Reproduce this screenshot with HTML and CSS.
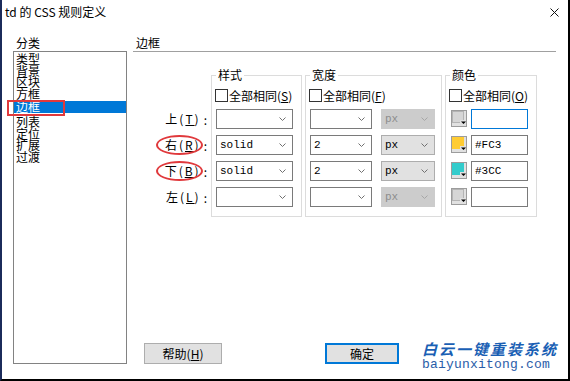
FILE: index.html
```html
<!DOCTYPE html>
<html lang="zh-CN">
<head>
    <meta charset="UTF-8">
    <meta name="viewport" content="width=device-width, initial-scale=1.0">
    <title>td 的 CSS 规则定义</title>
    <link rel="stylesheet" href="styles.css">
</head>
<body>
    <div class="window">
        <div class="titlebar">
            <span class="title">td 的 CSS 规则定义</span>
            <svg class="close" width="9" height="9" viewBox="0 0 9 9"><path d="M0.5 0.5L8.5 8.5M8.5 0.5L0.5 8.5" stroke="#111" stroke-width="1" fill="none"/></svg>
        </div>

        <div class="content">
            <div class="category">
                <div class="section-label">分类</div>
                <ul class="category-list">
                    <li>类型</li>
                    <li>背景</li>
                    <li>区块</li>
                    <li>方框</li>
                    <li class="selected">边框<span class="mark-box"></span></li>
                    <li>列表</li>
                    <li>定位</li>
                    <li>扩展</li>
                    <li>过渡</li>
                </ul>
            </div>

            <div class="panel">
                <div class="panel-title">边框</div>

                <div class="border-grid">
                    <div class="side-labels">
                        <div class="side-label"><span class="key">上(<u>T</u>)</span><span class="colon">:</span></div>
                        <div class="side-label"><span class="key marked">右(<u>R</u>)</span><span class="colon">:</span></div>
                        <div class="side-label"><span class="key marked">下(<u>B</u>)</span><span class="colon">:</span></div>
                        <div class="side-label"><span class="key">左(<u>L</u>)</span><span class="colon">:</span></div>
                    </div>

                    <fieldset class="group group-style">
                        <legend>样式</legend>
                        <div class="same"><span class="check"></span>全部相同(<u>S</u>)</div>
                        <div class="rows">
                            <div class="row"><div class="combo combo-style"><span></span><svg width="7" height="4" viewBox="0 0 7 4"><path d="M0.5 0.5L3.5 3.5L6.5 0.5" stroke="#707070" fill="none"/></svg></div></div>
                            <div class="row"><div class="combo combo-style"><span>solid</span><svg width="7" height="4" viewBox="0 0 7 4"><path d="M0.5 0.5L3.5 3.5L6.5 0.5" stroke="#707070" fill="none"/></svg></div></div>
                            <div class="row"><div class="combo combo-style"><span>solid</span><svg width="7" height="4" viewBox="0 0 7 4"><path d="M0.5 0.5L3.5 3.5L6.5 0.5" stroke="#707070" fill="none"/></svg></div></div>
                            <div class="row"><div class="combo combo-style"><span></span><svg width="7" height="4" viewBox="0 0 7 4"><path d="M0.5 0.5L3.5 3.5L6.5 0.5" stroke="#707070" fill="none"/></svg></div></div>
                        </div>
                    </fieldset>

                    <fieldset class="group group-width">
                        <legend>宽度</legend>
                        <div class="same"><span class="check"></span>全部相同(<u>F</u>)</div>
                        <div class="rows">
                            <div class="row">
                                <div class="combo combo-width"><span></span><svg width="7" height="4" viewBox="0 0 7 4"><path d="M0.5 0.5L3.5 3.5L6.5 0.5" stroke="#707070" fill="none"/></svg></div>
                                <div class="combo combo-unit disabled"><span>px</span><svg width="7" height="4" viewBox="0 0 7 4"><path d="M0.5 0.5L3.5 3.5L6.5 0.5" stroke="#a6a6a6" fill="none"/></svg></div>
                            </div>
                            <div class="row">
                                <div class="combo combo-width"><span>2</span><svg width="7" height="4" viewBox="0 0 7 4"><path d="M0.5 0.5L3.5 3.5L6.5 0.5" stroke="#707070" fill="none"/></svg></div>
                                <div class="combo combo-unit"><span>px</span><svg width="7" height="4" viewBox="0 0 7 4"><path d="M0.5 0.5L3.5 3.5L6.5 0.5" stroke="#707070" fill="none"/></svg></div>
                            </div>
                            <div class="row">
                                <div class="combo combo-width"><span>2</span><svg width="7" height="4" viewBox="0 0 7 4"><path d="M0.5 0.5L3.5 3.5L6.5 0.5" stroke="#707070" fill="none"/></svg></div>
                                <div class="combo combo-unit"><span>px</span><svg width="7" height="4" viewBox="0 0 7 4"><path d="M0.5 0.5L3.5 3.5L6.5 0.5" stroke="#707070" fill="none"/></svg></div>
                            </div>
                            <div class="row">
                                <div class="combo combo-width"><span></span><svg width="7" height="4" viewBox="0 0 7 4"><path d="M0.5 0.5L3.5 3.5L6.5 0.5" stroke="#707070" fill="none"/></svg></div>
                                <div class="combo combo-unit disabled"><span>px</span><svg width="7" height="4" viewBox="0 0 7 4"><path d="M0.5 0.5L3.5 3.5L6.5 0.5" stroke="#a6a6a6" fill="none"/></svg></div>
                            </div>
                        </div>
                    </fieldset>

                    <fieldset class="group group-color">
                        <legend>颜色</legend>
                        <div class="same"><span class="check"></span>全部相同(<u>O</u>)</div>
                        <div class="rows">
                            <div class="row">
                                <svg class="swatch" width="16" height="17" viewBox="0 0 16 17"><rect x="0.5" y="0.5" width="15" height="16" fill="#e1e1e1" stroke="#9c9c9c"/><rect x="1.5" y="1.5" width="11" height="11" fill="#d6d6d6" stroke="#b4b4b4"/><rect x="9" y="10" width="6" height="6" fill="#e1e1e1"/><path d="M10 11.5h5l-2.5 2.5z" fill="#000"/></svg>
                                <div class="color-input focused"></div>
                            </div>
                            <div class="row">
                                <svg class="swatch" width="16" height="17" viewBox="0 0 16 17"><rect x="0.5" y="0.5" width="15" height="16" fill="#e1e1e1" stroke="#9c9c9c"/><rect x="1" y="1" width="12" height="12" fill="#ffcc33"/><rect x="9" y="10" width="6" height="6" fill="#e1e1e1"/><path d="M10 11.5h5l-2.5 2.5z" fill="#000"/></svg>
                                <div class="color-input">#FC3</div>
                            </div>
                            <div class="row">
                                <svg class="swatch" width="16" height="17" viewBox="0 0 16 17"><rect x="0.5" y="0.5" width="15" height="16" fill="#e1e1e1" stroke="#9c9c9c"/><rect x="1" y="1" width="12" height="12" fill="#33cccc"/><rect x="9" y="10" width="6" height="6" fill="#e1e1e1"/><path d="M10 11.5h5l-2.5 2.5z" fill="#000"/></svg>
                                <div class="color-input">#3CC</div>
                            </div>
                            <div class="row">
                                <svg class="swatch" width="16" height="17" viewBox="0 0 16 17"><rect x="0.5" y="0.5" width="15" height="16" fill="#e1e1e1" stroke="#9c9c9c"/><rect x="1.5" y="1.5" width="11" height="11" fill="#d6d6d6" stroke="#b4b4b4"/><rect x="9" y="10" width="6" height="6" fill="#e1e1e1"/><path d="M10 11.5h5l-2.5 2.5z" fill="#000"/></svg>
                                <div class="color-input"></div>
                            </div>
                        </div>
                    </fieldset>
                </div>

                <div class="buttons">
                    <button class="btn">帮助(<u>H</u>)</button>
                    <button class="btn btn-default">确定</button>
                </div>
            </div>
        </div>

        <div class="watermark">
            <div class="wm-name">白云一键重装系统</div>
            <div class="wm-url">baiyunxitong.com</div>
        </div>
    </div>
</body>
</html>
```

FILE: styles.css
```css
* {
    box-sizing: border-box;
}

body {
    margin: 0;
    background-color: #fff;
    font-family: "Noto Sans CJK SC", "Microsoft YaHei", sans-serif;
    font-size: 12px;
    color: #000;
}

.window {
    position: relative;
    width: 570px;
    height: 381px;
    border-left: 2px solid #1b2b5a;
    border-right: 2px solid #000;
    border-bottom: 2px solid #000;
    background-color: #fff;
    display: flex;
    flex-direction: column;
}

.titlebar {
    height: 24px;
    display: flex;
    align-items: center;
    justify-content: space-between;
    padding: 0 9px 0 3px;
}

.title {
    line-height: 24px;
}

.close {
    display: block;
}

.content {
    flex: 1;
    display: flex;
    padding: 11px 0 15px 11px;
    min-height: 0;
}

.category {
    width: 114px;
    display: flex;
    flex-direction: column;
}

.section-label {
    height: 16px;
    line-height: 16px;
    padding-left: 3px;
}

.category-list {
    flex: 1;
    margin: 0;
    padding: 1px 0 0 0;
    list-style: none;
    border: 1px solid #828282;
}

.category-list li {
    height: 11.5px;
    line-height: 11.5px;
    padding-left: 2px;
    white-space: nowrap;
}

.category-list li.selected {
    position: relative;
    height: 12px;
    line-height: 12px;
    margin: 2px 0 3px;
    background-color: #0078d7;
    color: #fff;
}

.mark-box {
    position: absolute;
    left: -7px;
    top: -1px;
    width: 58px;
    height: 16px;
    border: 2px solid #e0393c;
}

.panel {
    width: 423px;
    margin-left: 6px;
    display: flex;
    flex-direction: column;
}

.panel-title {
    height: 17px;
    line-height: 16px;
    padding-left: 3px;
    border-bottom: 1px solid #a0a0a0;
}

.border-grid {
    display: flex;
    align-items: flex-start;
    margin-top: 16px;
}

.side-labels {
    width: 78px;
    padding-top: 41px;
    display: flex;
    flex-direction: column;
    gap: 6px;
}

.side-label {
    height: 20px;
    display: flex;
    align-items: center;
    justify-content: flex-end;
    padding-right: 4px;
}

.side-label .key {
    position: relative;
    line-height: 20px;
    letter-spacing: 2px;
}

.side-label .colon {
    margin-left: 3px;
}

.key.marked::after {
    content: "";
    position: absolute;
    top: 0;
    bottom: 0;
    left: -9px;
    right: -2px;
    border: 2px solid #e0393c;
    border-radius: 50%;
}

.group {
    margin: 0 0 0 3px;
    padding: 0 3px 9px 4px;
    border: 1px solid #dcdcdc;
    min-width: 0;
}

.group-style {
    margin-left: 0;
    width: 91px;
}

.group-width {
    width: 137px;
}

.group-color {
    width: 92px;
}

.group legend {
    padding: 0 2px;
    line-height: 14px;
}

.same {
    display: flex;
    align-items: center;
    height: 14px;
    margin: 6px 0 0 -1px;
    white-space: nowrap;
}

.check {
    width: 13px;
    height: 13px;
    border: 1px solid #333;
    background-color: #fff;
    margin-right: 1px;
}

.rows {
    display: flex;
    flex-direction: column;
    gap: 6px;
    margin-top: 7px;
}

.row {
    display: flex;
    align-items: flex-start;
    height: 20px;
}

.combo {
    height: 20px;
    display: flex;
    align-items: center;
    justify-content: space-between;
    padding: 0 6px 0 3px;
    border: 1px solid #7a7a7a;
    background-color: #fff;
    font-family: "Liberation Mono", monospace;
    font-size: 11px;
}

.combo svg {
    display: block;
}

.combo-style {
    width: 77px;
}

.combo-width {
    width: 62px;
}

.combo-unit {
    width: 54px;
    margin-left: 9px;
    background-color: #e1e1e1;
    border-color: #adadad;
}

.combo-unit.disabled {
    background-color: #cccccc;
    border-color: #cccccc;
    color: #8c8c8c;
}

.swatch {
    display: block;
    margin: 1px 0 0 1px;
}

.color-input {
    width: 57px;
    height: 20px;
    margin-left: 4px;
    padding-left: 3px;
    line-height: 18px;
    border: 1px solid #7a7a7a;
    background-color: #fff;
    font-family: "Liberation Mono", monospace;
    font-size: 11px;
}

.color-input.focused {
    border-color: #0078d7;
}

.buttons {
    margin-top: auto;
    display: flex;
    padding-left: 11px;
}

.btn {
    width: 78px;
    height: 21px;
    padding: 0;
    border: 1px solid #adadad;
    background-color: #e1e1e1;
    font-family: "Noto Sans CJK SC", sans-serif;
    font-size: 12px;
    line-height: 18px;
    color: #000;
}

.btn-default {
    width: 74px;
    margin-left: 103px;
    border: 2px solid #0078d7;
}

.watermark {
    position: absolute;
    right: 2px;
    bottom: 0;
    width: 160px;
    height: 42px;
    padding: 3px 0 0 16px;
    background-color: #fff;
}

.wm-name {
    font-size: 15px;
    font-weight: bold;
    font-style: italic;
    letter-spacing: 2px;
    line-height: 18px;
    color: #1a5fb4;
    white-space: nowrap;
}

.wm-url {
    font-family: "Liberation Mono", monospace;
    font-size: 13px;
    line-height: 14px;
    color: #2a5da8;
    letter-spacing: 0.2px;
}
```
